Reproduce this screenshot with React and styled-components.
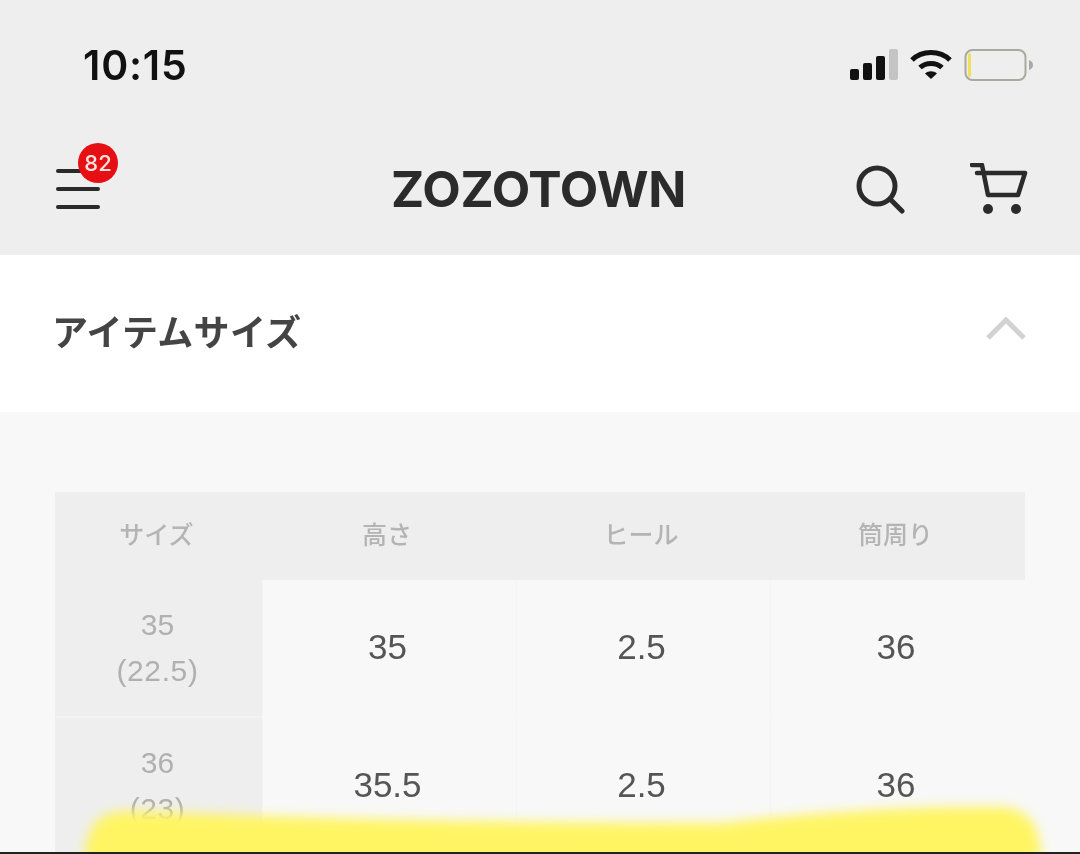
import React from "react";
import styled, { createGlobalStyle } from "styled-components";

const GlobalStyle = createGlobalStyle`
  html, body {
    margin: 0;
    padding: 0;
    background: #f8f8f8;
  }
  body {
    font-family: Inter, "Noto Sans CJK JP", sans-serif;
  }
`;

const Page = styled.div`
  position: relative;
  width: 1080px;
  height: 854px;
  overflow: hidden;
  display: flex;
  flex-direction: column;
  background: #f8f8f8;
  border-bottom: 2px solid #222;
  box-sizing: border-box;
`;

const TopArea = styled.div`
  background: #eeeeee;
  height: 255px;
  flex-shrink: 0;
  display: flex;
  flex-direction: column;
  filter: blur(0.7px);
`;

const StatusBar = styled.div`
  height: 130px;
  display: flex;
  align-items: center;
  justify-content: space-between;
  padding: 0 46px 0 83px;
`;

const Time = styled.div`
  font-size: 41px;
  font-weight: 600;
  color: #111;
  letter-spacing: 0.8px;
`;

const StatusIcons = styled.div`
  display: flex;
  align-items: center;
  gap: 12px;
`;

const Header = styled.div`
  height: 125px;
  box-sizing: border-box;
  display: grid;
  grid-template-columns: 335px auto 1fr;
  align-items: center;
  padding: 0 52px 8px 56px;
`;

const MenuButton = styled.div`
  position: relative;
  width: 44px;
  display: flex;
  flex-direction: column;
  gap: 14px;
`;

const MenuLine = styled.span`
  display: block;
  height: 4px;
  border-radius: 2px;
  background: #2a2a2a;
`;

const Badge = styled.span`
  position: absolute;
  left: 22px;
  top: -26px;
  width: 40px;
  height: 40px;
  border-radius: 50%;
  background: #e60f14;
  color: #ffe4dc;
  font-size: 22px;
  font-weight: 500;
  display: flex;
  align-items: center;
  justify-content: center;
`;

const Logo = styled.div`
  font-size: 50px;
  font-weight: 700;
  color: #2b2b2b;
  letter-spacing: -0.3px;
`;

const HeaderActions = styled.div`
  display: flex;
  justify-content: flex-end;
  align-items: center;
  gap: 65px;
`;

const SectionHead = styled.div`
  height: 157px;
  box-sizing: border-box;
  flex-shrink: 0;
  background: #fff;
  display: flex;
  align-items: center;
  justify-content: space-between;
  padding: 0 54px 8px 52px;
  filter: blur(0.6px);
`;

const SectionTitle = styled.h2`
  margin: 0;
  font-size: 36px;
  font-weight: 700;
  color: #444;
  letter-spacing: 0.3px;
  font-family: "Noto Sans CJK JP", sans-serif;
`;

const Chevron = styled.svg`
  margin-bottom: 4px;
`;

const Body = styled.div`
  flex: 1;
  padding: 80px 55px 0;
  filter: blur(0.7px);
`;

const SizeTable = styled.div`
  display: grid;
  grid-template-columns: 207px 254px 254px 255px;
  grid-auto-rows: min-content;
`;

const HeadCell = styled.div`
  height: 88px;
  box-sizing: border-box;
  padding: 0 4px 6px 0;
  display: flex;
  align-items: center;
  justify-content: center;
  background: #eeeeee;
  color: #b4b4b4;
  font-size: 25px;
  font-weight: 500;
  font-family: "Noto Sans CJK JP", sans-serif;
`;

const SizeCell = styled.div`
  height: 136px;
  margin-bottom: 2px;
  box-sizing: border-box;
  padding-right: 2px;
  display: flex;
  flex-direction: column;
  align-items: center;
  justify-content: center;
  gap: 8px;
  background: #eeeeee;
  box-shadow: 0 2px 0 #f3f3f3;
  color: #b0b0b0;
  font-family: "Liberation Sans", Arial, sans-serif;
  font-size: 30px;
  line-height: 38px;
`;

const SubSize = styled.span`
  letter-spacing: 0.6px;
`;

const ValueCell = styled.div`
  height: 136px;
  margin-bottom: 2px;
  box-sizing: border-box;
  padding: 0 4px 2px 0;
  display: flex;
  align-items: center;
  justify-content: center;
  color: #555;
  font-family: "Liberation Sans", Arial, sans-serif;
  font-size: 35px;
  border-left: 1px solid #f4f4f4;
`;

const Highlight = styled.svg`
  position: absolute;
  left: 0;
  bottom: 0;
  width: 1080px;
  height: 60px;
`;

const heads = ["サイズ", "高さ", "ヒール", "筒周り"];
const rows = [
  { size: "35", sub: "(22.5)", values: ["35", "2.5", "36"] },
  { size: "36", sub: "(23)", values: ["35.5", "2.5", "36"] },
];

const App = () => (
  <>
    <GlobalStyle />
    <Page>
      <TopArea>
        <StatusBar>
          <Time>10:15</Time>
          <StatusIcons>
            <svg width="48" height="32" viewBox="0 0 48 32">
              <rect x="0" y="20" width="9" height="11" rx="2" fill="#111" />
              <rect x="13" y="14" width="9" height="17" rx="2" fill="#111" />
              <rect x="26" y="7" width="9" height="24" rx="2" fill="#111" />
              <rect x="39" y="0" width="9" height="31" rx="2" fill="#c4c4c4" />
            </svg>
            <svg width="42" height="32" viewBox="0 0 42 32" fill="none" stroke="#111" strokeWidth="5">
              <path d="M2 11 C12 1 30 1 40 11" />
              <path d="M10 18.5 C16 13 26 13 32 18.5" />
              <path d="M21 30 L15 24.5 C18.5 21.5 23.5 21.5 27 24.5 Z" fill="#111" stroke="none" />
            </svg>
            <svg width="70" height="34" viewBox="0 0 70 34" fill="none">
              <rect x="1.5" y="2" width="60" height="30" rx="7" stroke="#a9a9a0" strokeWidth="2" />
              <rect x="4" y="5" width="3" height="24" rx="1.5" fill="#f2e05a" />
              <path d="M65 12 C68 13 69 15 69 17 C69 19 68 21 65 22 Z" fill="#a9a9a9" />
            </svg>
          </StatusIcons>
        </StatusBar>
        <Header>
          <MenuButton>
            <MenuLine />
            <MenuLine />
            <MenuLine />
            <Badge>82</Badge>
          </MenuButton>
          <Logo>ZOZOTOWN</Logo>
          <HeaderActions>
            <svg width="50" height="50" viewBox="0 0 50 50" fill="none" stroke="#2b2b2b" strokeWidth="5" strokeLinecap="round">
              <circle cx="22" cy="22" r="18" />
              <path d="M36 36 L47 47" />
            </svg>
            <svg width="58" height="52" viewBox="0 0 58 52" fill="none" stroke="#2b2b2b" strokeWidth="4.5" strokeLinecap="round" strokeLinejoin="round">
              <path d="M2 2 H12 L18 32 H48 L55 10 H7" />
              <circle cx="18" cy="46" r="5" fill="#2b2b2b" stroke="none" />
              <circle cx="46" cy="46" r="5" fill="#2b2b2b" stroke="none" />
            </svg>
          </HeaderActions>
        </Header>
      </TopArea>
      <SectionHead>
        <SectionTitle>アイテムサイズ</SectionTitle>
        <Chevron width="40" height="26" viewBox="0 0 40 26" fill="none" stroke="#d2d2d2" strokeWidth="5">
          <path d="M2 23 L20 5 L38 23" />
        </Chevron>
      </SectionHead>
      <Body>
        <SizeTable>
          {heads.map((h) => (
            <HeadCell key={h}>{h}</HeadCell>
          ))}
          {rows.map((row) => (
            <React.Fragment key={row.size}>
              <SizeCell>
                <span>{row.size}</span>
                <SubSize>{row.sub}</SubSize>
              </SizeCell>
              {row.values.map((v, i) => (
                <ValueCell key={i}>{v}</ValueCell>
              ))}
            </React.Fragment>
          ))}
        </SizeTable>
      </Body>
      <Highlight viewBox="0 0 1080 60">
        <defs>
          <filter id="soft" x="-5%" y="-30%" width="110%" height="160%">
            <feGaussianBlur stdDeviation="6" />
          </filter>
        </defs>
        <path
          d="M84 70 C86 36 96 18 130 19 C240 23 380 30 720 31 C800 22 900 14 1000 15 C1034 17 1040 38 1042 70 Z"
          fill="#fff563"
          filter="url(#soft)"
        />
      </Highlight>
    </Page>
  </>
);

export default App;
